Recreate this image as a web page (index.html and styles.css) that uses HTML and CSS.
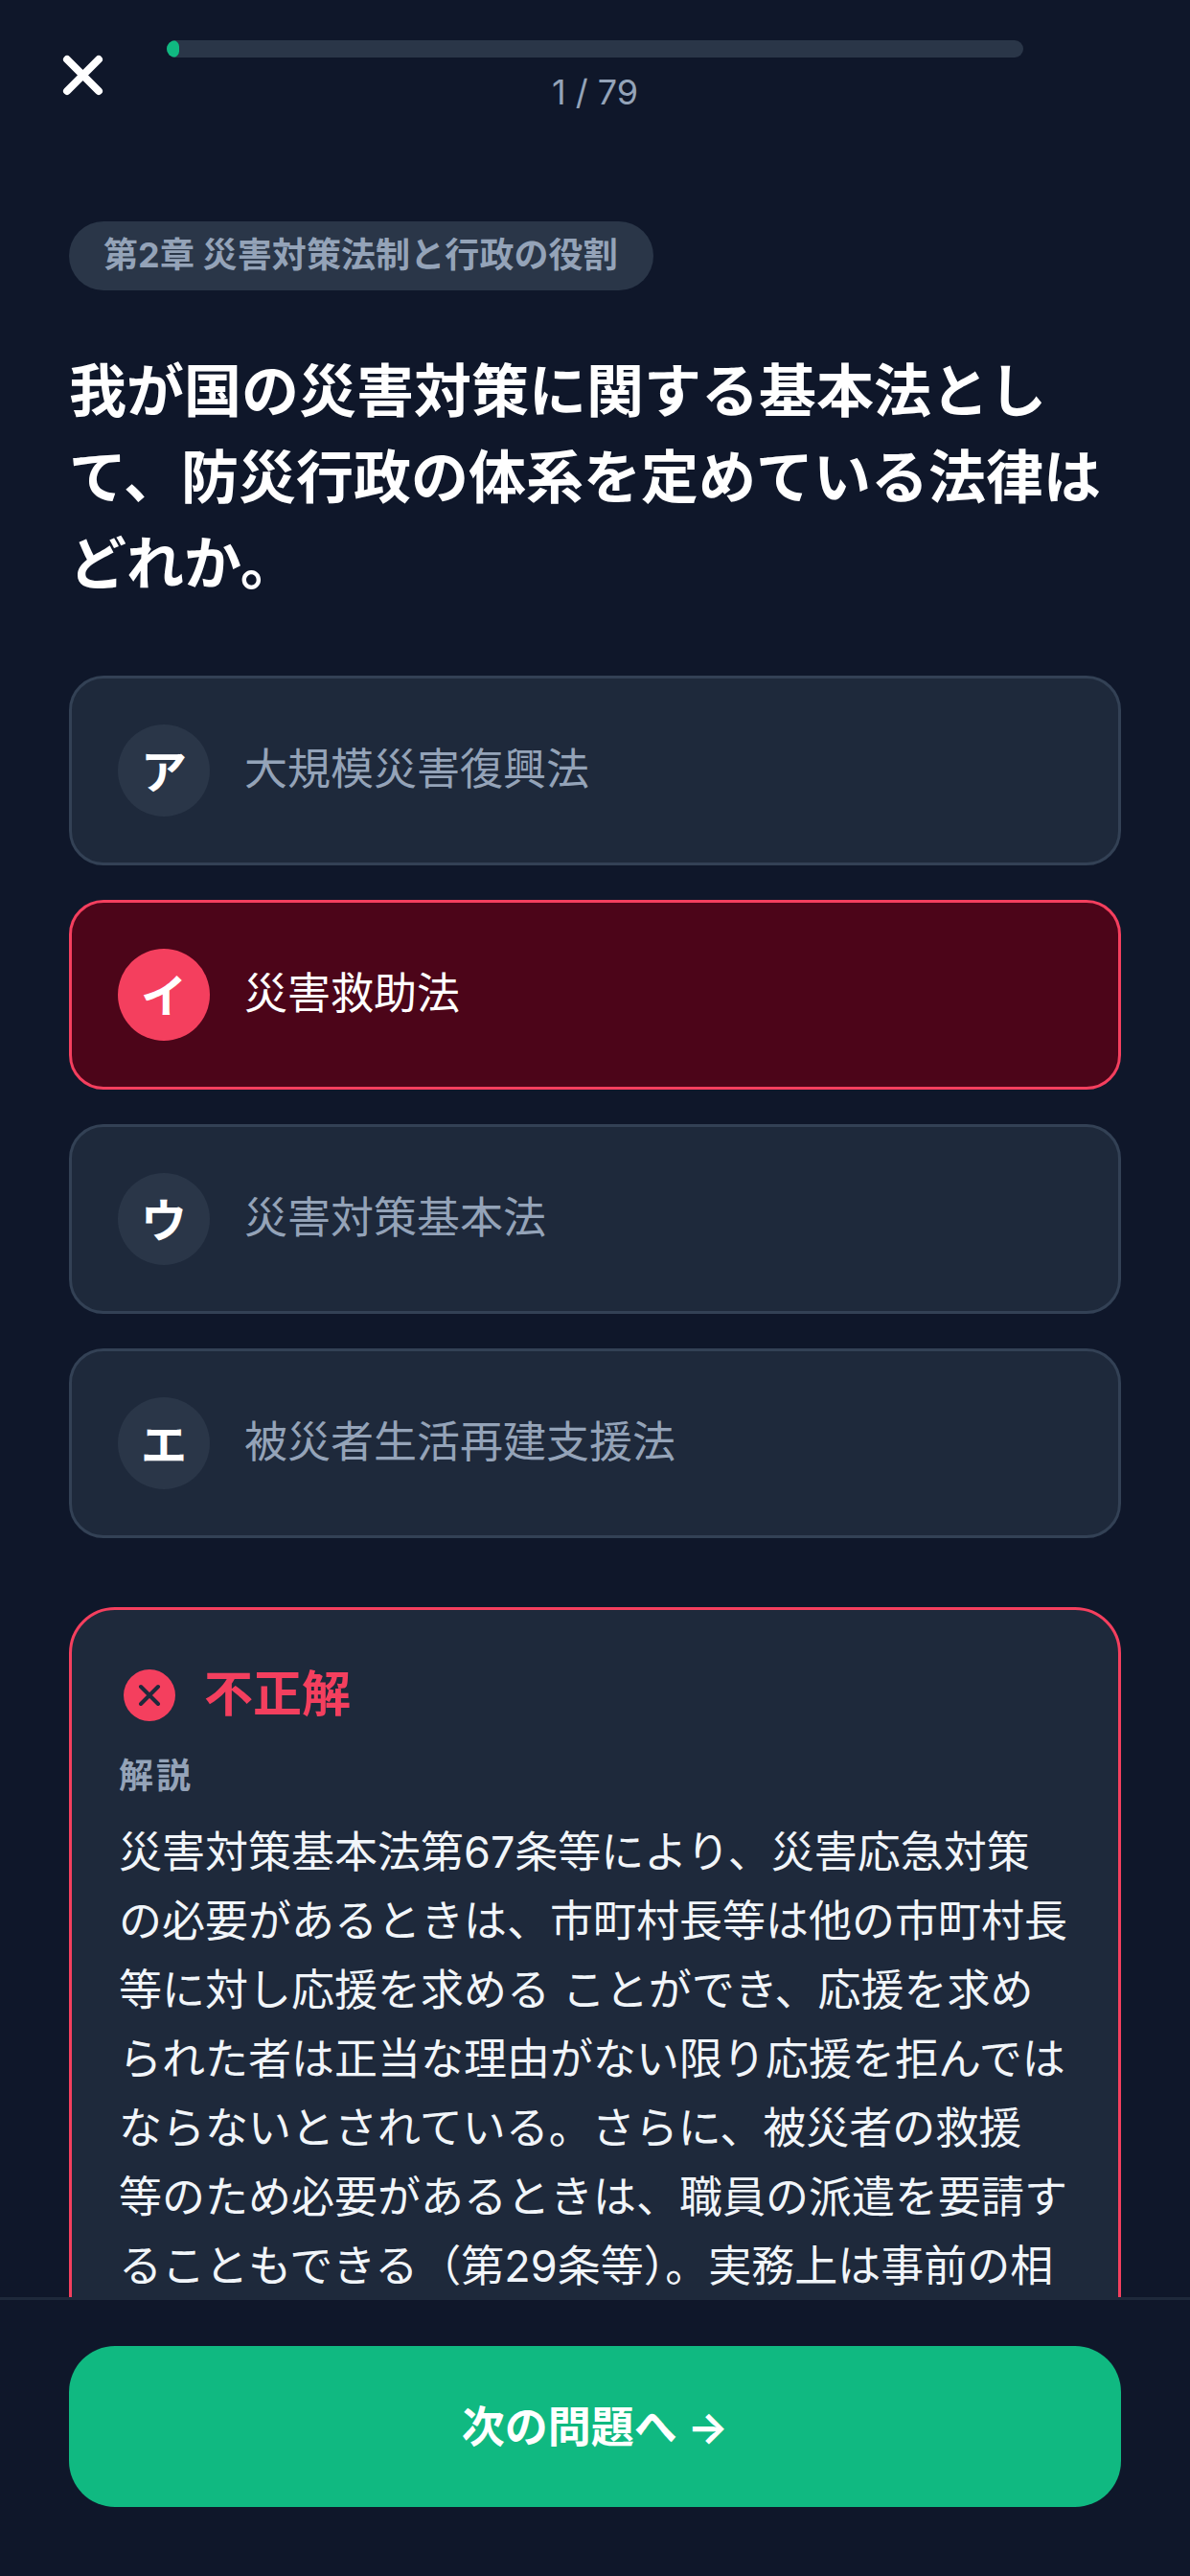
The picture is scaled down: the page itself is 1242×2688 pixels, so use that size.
FILE: index.html
```html
<!DOCTYPE html>
<html lang="ja">
<head>
<meta charset="utf-8">
<title>問題</title>
<link rel="stylesheet" href="styles.css">
</head>
<body>
<div class="app">
  <header class="top">
    <button class="close" aria-label="閉じる">
      <svg viewBox="0 0 43 43" width="43" height="43"><path d="M5 5 38 38M38 5 5 38" fill="none" stroke="#fff" stroke-width="8" stroke-linecap="round"/></svg>
    </button>
    <div class="progress">
      <div class="track"><div class="fill"></div></div>
      <div class="count">1 / 79</div>
    </div>
  </header>
  <main class="main">
    <div class="chapter">第2章 災害対策法制と行政の役割</div>
    <h1 class="question">我が国の災害対策に関する基本法として、防災行政の体系を定めている法律はどれか。</h1>
    <div class="options">
      <div class="option"><span class="mark">ア</span><span class="label">大規模災害復興法</span></div>
      <div class="option wrong"><span class="mark">イ</span><span class="label">災害救助法</span></div>
      <div class="option"><span class="mark">ウ</span><span class="label">災害対策基本法</span></div>
      <div class="option"><span class="mark">エ</span><span class="label">被災者生活再建支援法</span></div>
    </div>
    <section class="result">
      <div class="verdict">
        <svg class="verdict-icon" viewBox="0 0 64 64" width="64" height="64"><circle cx="32" cy="32" r="27" fill="#f43f5e"/><path d="M23 23 41 41M41 23 23 41" fill="none" stroke="#1e293b" stroke-width="4" stroke-linecap="round"/></svg>
        <span class="verdict-text">不正解</span>
      </div>
      <div class="exp-title">解説</div>
      <p class="exp-body">災害対策基本法第67条等により、災害応急対策の必要があるときは、市町村長等は他の市町村長等に対し応援を求める ことができ、応援を求められた者は正当な理由がない限り応援を拒んではならないとされている。さらに、被災者の救援 等のため必要があるときは、職員の派遣を要請することもできる（第29条等）。実務上は事前の相</p>
    </section>
  </main>
  <footer class="footer">
    <button class="next">次の問題へ →</button>
  </footer>
</div>
</body>
</html>
```
FILE: styles.css
```css
* { box-sizing: border-box; margin: 0; padding: 0; }
html, body { background: #0f172a; }
body { font-family: Inter, "Noto Sans CJK JP", sans-serif; color: #fff; }
.app { width: 1242px; height: 2688px; display: flex; flex-direction: column; overflow: hidden; }

.top { display: grid; grid-template-columns: 174px 894px 174px; height: 120px; padding-top: 42px; flex: none; }
.close { background: none; border: 0; width: 43px; height: 43px; margin: 15px 0 0 65px; display: block; }
.close svg { display: block; }
.track { height: 18px; border-radius: 9px; background: #2a3648; overflow: hidden; }
.fill { width: 13px; height: 100%; border-radius: 9px; background: #10b981; }
.count { margin-top: 12px; text-align: center; font-size: 36px; line-height: 48px; color: #94a3b8; }

.main { flex: 1; min-height: 0; overflow: hidden; padding: 111px 72px 0; }
.chapter { display: inline-block; height: 72px; line-height: 71px; padding: 0 37px 0 36px; border-radius: 36px; background: #2a3648; color: #94a3b8; font-size: 36px; font-weight: 700; letter-spacing: .1px; vertical-align: top; }
.question { margin-top: 60px; margin-bottom: -2px; font-size: 60px; line-height: 90px; font-weight: 700; color: #fff; }

.options { margin-top: 74px; display: flex; flex-direction: column; gap: 36px; }
.option { height: 198px; display: flex; align-items: center; gap: 36px; padding: 0 48px; border: 3px solid #334155; border-radius: 36px; background: #1e293b; }
.mark { width: 96px; height: 96px; flex: none; display: flex; align-items: center; justify-content: center; padding-bottom: 4px; border-radius: 50%; background: #2a3648; color: #fff; font-size: 48px; font-weight: 700; }
.label { font-size: 45px; line-height: 66px; color: #94a3b8; margin-top: -2px; }
.option.wrong { background: #4c0519; border-color: #f43f5e; }
.wrong .mark { background: #f43f5e; }
.wrong .label { color: #fff; }

.result { margin-top: 72px; min-height: 900px; padding: 53px 49px 48px; border: 3px solid #f43f5e; border-radius: 48px; background: #1e293b; }
.verdict { display: flex; align-items: center; gap: 25px; height: 72px; }
.verdict-icon { flex: none; display: block; }
.verdict-text { font-size: 51px; line-height: 72px; font-weight: 700; color: #f43f5e; margin-top: -2px; }
.exp-title { margin-top: 24px; font-size: 36px; line-height: 48px; font-weight: 700; letter-spacing: 3px; color: #94a3b8; }
.exp-body { margin-top: 20px; font-size: 45px; line-height: 72px; color: #f1f5f9; }

.footer { flex: none; height: 291px; padding: 48px 72px 0; border-top: 3px solid #1e293b; background: #0f172a; }
.next { display: block; width: 100%; height: 168px; padding-bottom: 5px; border: 0; border-radius: 48px; background: #10b981; color: #fff; font-family: inherit; font-size: 45px; font-weight: 700; }
```
